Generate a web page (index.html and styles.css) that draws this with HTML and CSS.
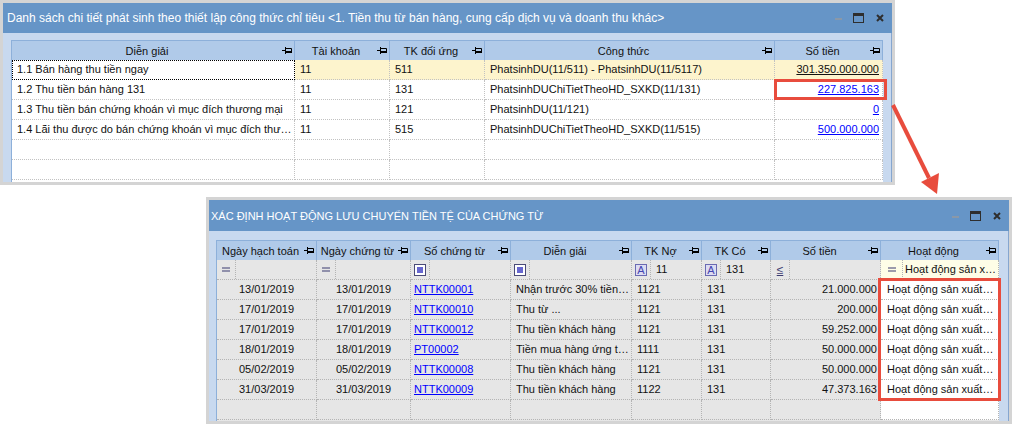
FILE: index.html
```html
<!DOCTYPE html>
<html lang="vi">
<head>
<meta charset="utf-8">
<title>Danh sách chi tiết phát sinh</title>
<link rel="stylesheet" href="styles.css">
</head>
<body>
<div class="win win-top">
  <div class="titlebar">
    <div class="title">Danh sách chi tiết phát sinh theo thiết lập công thức chỉ tiêu &lt;1. Tiền thu từ bán hàng, cung cấp dịch vụ và doanh thu khác&gt;</div>
    <div class="controls">
      <span class="ctl-min"></span>
      <span class="ctl-max"></span>
      <svg class="ctl-close" width="8" height="8" viewBox="0 0 8 8"><path d="M1 1L7 7M7 1L1 7" stroke="#2e2e2e" stroke-width="2"/></svg>
    </div>
  </div>
  <div class="wbody">
    <div class="grid gtop">
      <div class="hdr">
        <div class="hc"><span class="ht">Diễn giải</span><svg class="pin" width="10" height="7" viewBox="0 0 10 7"><path d="M0 3.5H3M3.5 0V7M4 1.5H9.5V5" fill="none" stroke="#000"/><path d="M4 5H10" stroke="#000" stroke-width="2"/></svg></div>
        <div class="hc"><span class="ht">Tài khoản</span><svg class="pin" width="10" height="7" viewBox="0 0 10 7"><path d="M0 3.5H3M3.5 0V7M4 1.5H9.5V5" fill="none" stroke="#000"/><path d="M4 5H10" stroke="#000" stroke-width="2"/></svg></div>
        <div class="hc"><span class="ht">TK đối ứng</span><svg class="pin" width="10" height="7" viewBox="0 0 10 7"><path d="M0 3.5H3M3.5 0V7M4 1.5H9.5V5" fill="none" stroke="#000"/><path d="M4 5H10" stroke="#000" stroke-width="2"/></svg></div>
        <div class="hc"><span class="ht">Công thức</span><svg class="pin" width="10" height="7" viewBox="0 0 10 7"><path d="M0 3.5H3M3.5 0V7M4 1.5H9.5V5" fill="none" stroke="#000"/><path d="M4 5H10" stroke="#000" stroke-width="2"/></svg></div>
        <div class="hc"><span class="ht">Số tiền</span><svg class="pin" width="10" height="7" viewBox="0 0 10 7"><path d="M0 3.5H3M3.5 0V7M4 1.5H9.5V5" fill="none" stroke="#000"/><path d="M4 5H10" stroke="#000" stroke-width="2"/></svg></div>
      </div>
      <div class="row focus">
        <div class="c cur">1.1 Bán hàng thu tiền ngay</div>
        <div class="c">11</div>
        <div class="c">511</div>
        <div class="c">PhatsinhDU(11/511) - PhatsinhDU(11/5117)</div>
        <div class="c r"><a class="lnk lnk-sel" href="#">301.350.000.000</a></div>
      </div>
      <div class="row">
        <div class="c">1.2 Thu tiền bán hàng 131</div>
        <div class="c">11</div>
        <div class="c">131</div>
        <div class="c">PhatsinhDUChiTietTheoHD_SXKD(11/131)</div>
        <div class="c r"><a class="lnk" href="#">227.825.163</a></div>
      </div>
      <div class="row">
        <div class="c">1.3 Thu tiền bán chứng khoán vì mục đích thương mại</div>
        <div class="c">11</div>
        <div class="c">121</div>
        <div class="c">PhatsinhDU(11/121)</div>
        <div class="c r"><a class="lnk" href="#">0</a></div>
      </div>
      <div class="row">
        <div class="c">1.4 Lãi thu được do bán chứng khoán vì mục đích thư…</div>
        <div class="c">11</div>
        <div class="c">515</div>
        <div class="c">PhatsinhDUChiTietTheoHD_SXKD(11/515)</div>
        <div class="c r"><a class="lnk" href="#">500.000.000</a></div>
      </div>
      <div class="row">
        <div class="c"></div><div class="c"></div><div class="c"></div><div class="c"></div><div class="c"></div>
      </div>
      <div class="row">
        <div class="c"></div><div class="c"></div><div class="c"></div><div class="c"></div><div class="c"></div>
      </div>
    </div>
  </div>
</div>

<div class="win win-bottom">
  <div class="titlebar">
    <div class="title">XÁC ĐỊNH HOẠT ĐỘNG LƯU CHUYỂN TIỀN TỆ CỦA CHỨNG TỪ</div>
    <div class="controls">
      <span class="ctl-min"></span>
      <span class="ctl-max"></span>
      <svg class="ctl-close" width="8" height="8" viewBox="0 0 8 8"><path d="M1 1L7 7M7 1L1 7" stroke="#2e2e2e" stroke-width="2"/></svg>
    </div>
  </div>
  <div class="wbody wbody-b">
    <div class="grid gbot">
      <div class="hdr">
        <div class="hc"><span class="ht">Ngày hạch toán</span><svg class="pin" width="10" height="7" viewBox="0 0 10 7"><path d="M0 3.5H3M3.5 0V7M4 1.5H9.5V5" fill="none" stroke="#000"/><path d="M4 5H10" stroke="#000" stroke-width="2"/></svg></div>
        <div class="hc"><span class="ht">Ngày chứng từ</span><svg class="pin" width="10" height="7" viewBox="0 0 10 7"><path d="M0 3.5H3M3.5 0V7M4 1.5H9.5V5" fill="none" stroke="#000"/><path d="M4 5H10" stroke="#000" stroke-width="2"/></svg></div>
        <div class="hc"><span class="ht">Số chứng từ</span><svg class="pin" width="10" height="7" viewBox="0 0 10 7"><path d="M0 3.5H3M3.5 0V7M4 1.5H9.5V5" fill="none" stroke="#000"/><path d="M4 5H10" stroke="#000" stroke-width="2"/></svg></div>
        <div class="hc"><span class="ht">Diễn giải</span><svg class="pin" width="10" height="7" viewBox="0 0 10 7"><path d="M0 3.5H3M3.5 0V7M4 1.5H9.5V5" fill="none" stroke="#000"/><path d="M4 5H10" stroke="#000" stroke-width="2"/></svg></div>
        <div class="hc"><span class="ht">TK Nợ</span><svg class="pin" width="10" height="7" viewBox="0 0 10 7"><path d="M0 3.5H3M3.5 0V7M4 1.5H9.5V5" fill="none" stroke="#000"/><path d="M4 5H10" stroke="#000" stroke-width="2"/></svg></div>
        <div class="hc"><span class="ht">TK Có</span><svg class="pin" width="10" height="7" viewBox="0 0 10 7"><path d="M0 3.5H3M3.5 0V7M4 1.5H9.5V5" fill="none" stroke="#000"/><path d="M4 5H10" stroke="#000" stroke-width="2"/></svg></div>
        <div class="hc"><span class="ht">Số tiền</span><svg class="pin" width="10" height="7" viewBox="0 0 10 7"><path d="M0 3.5H3M3.5 0V7M4 1.5H9.5V5" fill="none" stroke="#000"/><path d="M4 5H10" stroke="#000" stroke-width="2"/></svg></div>
        <div class="hc"><span class="ht">Hoạt động</span><svg class="pin" width="10" height="7" viewBox="0 0 10 7"><path d="M0 3.5H3M3.5 0V7M4 1.5H9.5V5" fill="none" stroke="#000"/><path d="M4 5H10" stroke="#000" stroke-width="2"/></svg></div>
      </div>
      <div class="row frow">
        <div class="c f"><span class="fi"><svg width="8" height="5" viewBox="0 0 8 5"><path d="M0 1H8M0 4H8" stroke="#3b3b70" stroke-width="1.2"/></svg></span><span class="fv"></span></div>
        <div class="c f"><span class="fi"><svg width="8" height="5" viewBox="0 0 8 5"><path d="M0 1H8M0 4H8" stroke="#3b3b70" stroke-width="1.2"/></svg></span><span class="fv"></span></div>
        <div class="c f"><span class="fi fi-l"><svg width="12" height="12" viewBox="0 0 12 12"><rect x="0.5" y="0.5" width="11" height="11" fill="#fff" stroke="#4a4a78"/><rect x="3" y="3" width="6" height="6" fill="#6767cf"/></svg></span><span class="fv"></span></div>
        <div class="c f"><span class="fi fi-l"><svg width="12" height="12" viewBox="0 0 12 12"><rect x="0.5" y="0.5" width="11" height="11" fill="#fff" stroke="#4a4a78"/><rect x="3" y="3" width="6" height="6" fill="#6767cf"/></svg></span><span class="fv"></span></div>
        <div class="c f"><span class="fi fi-l"><span class="ico-a">A</span></span><span class="fv">11</span></div>
        <div class="c f"><span class="fi fi-l"><span class="ico-a">A</span></span><span class="fv">131</span></div>
        <div class="c f"><span class="fi"><span class="ico-le">≤</span></span><span class="fv"></span></div>
        <div class="c f fy"><span class="fi fi-w"><svg width="8" height="5" viewBox="0 0 8 5"><path d="M0 1H8M0 4H8" stroke="#3b3b70" stroke-width="1.2"/></svg></span><span class="fv fv-t">Hoạt động sản x…</span></div>
      </div>
      <div class="row">
        <div class="c ctr">13/01/2019</div><div class="c ctr">13/01/2019</div><div class="c lk"><a class="lnk" href="#">NTTK00001</a></div><div class="c">Nhận trước 30% tiền…</div><div class="c">1121</div><div class="c">131</div><div class="c r">21.000.000</div><div class="c hd">Hoạt động sản xuất…</div>
      </div>
      <div class="row">
        <div class="c ctr">17/01/2019</div><div class="c ctr">17/01/2019</div><div class="c lk"><a class="lnk" href="#">NTTK00010</a></div><div class="c">Thu từ ...</div><div class="c">1121</div><div class="c">131</div><div class="c r">200.000</div><div class="c hd">Hoạt động sản xuất…</div>
      </div>
      <div class="row">
        <div class="c ctr">17/01/2019</div><div class="c ctr">17/01/2019</div><div class="c lk"><a class="lnk" href="#">NTTK00012</a></div><div class="c">Thu tiền khách hàng</div><div class="c">1121</div><div class="c">131</div><div class="c r">59.252.000</div><div class="c hd">Hoạt động sản xuất…</div>
      </div>
      <div class="row">
        <div class="c ctr">18/01/2019</div><div class="c ctr">18/01/2019</div><div class="c lk"><a class="lnk" href="#">PT00002</a></div><div class="c">Tiền mua hàng ứng t…</div><div class="c">1111</div><div class="c">131</div><div class="c r">50.000.000</div><div class="c hd">Hoạt động sản xuất…</div>
      </div>
      <div class="row">
        <div class="c ctr">05/02/2019</div><div class="c ctr">05/02/2019</div><div class="c lk"><a class="lnk" href="#">NTTK00008</a></div><div class="c">Thu tiền khách hàng</div><div class="c">1121</div><div class="c">131</div><div class="c r">50.000.000</div><div class="c hd">Hoạt động sản xuất…</div>
      </div>
      <div class="row">
        <div class="c ctr">31/03/2019</div><div class="c ctr">31/03/2019</div><div class="c lk"><a class="lnk" href="#">NTTK00009</a></div><div class="c">Thu tiền khách hàng</div><div class="c">1122</div><div class="c">131</div><div class="c r">47.373.163</div><div class="c hd">Hoạt động sản xuất…</div>
      </div>
      <div class="row">
        <div class="c"></div><div class="c"></div><div class="c"></div><div class="c"></div><div class="c"></div><div class="c"></div><div class="c"></div><div class="c hd"></div>
      </div>
    </div>
  </div>
</div>

<div class="mark mark-top"></div>
<div class="mark mark-bottom"></div>
<svg class="arrow" width="1017" height="427" viewBox="0 0 1017 427">
  <line x1="893" y1="105" x2="929" y2="178" stroke="#e84c3d" stroke-width="4"/>
  <polygon points="937,194 921,182 939,173" fill="#e84c3d"/>
</svg>
</body>
</html>
```

FILE: styles.css
```css
* { box-sizing: border-box; }
html, body { margin: 0; padding: 0; }
body {
  width: 1017px;
  height: 427px;
  background: #fff;
  position: relative;
  overflow: hidden;
  font-family: "Liberation Sans", Arial, sans-serif;
  font-size: 11px;
  color: #111;
}

.win {
  position: absolute;
  border: 3px solid #d4d4d4;
  background: #c8d9ef;
  display: flex;
  flex-direction: column;
}
.win-top { left: 0; top: 0; width: 895px; height: 185px; }
.win-bottom { left: 206px; top: 197px; width: 806px; height: 227px; }

.titlebar {
  height: 30px;
  flex: none;
  background: #6695c7;
  color: #fff;
  display: flex;
  align-items: center;
  padding-left: 4px;
  font-size: 12px;
}
.win-bottom .titlebar { height: 31px; padding-left: 2px; font-size: 11px; }
.title { flex: 1; white-space: nowrap; overflow: hidden; }
.controls { display: flex; align-items: center; margin-right: 8px; }
.ctl-min { width: 7px; height: 2px; background: #8a98a8; margin-top: 2px; }
.ctl-max {
  width: 11px; height: 10px;
  border: 1px solid #2e2e2e; border-top-width: 3px;
  margin-left: 11px;
}
.ctl-close { margin-left: 12px; }

.wbody {
  flex: 1;
  min-height: 0;
  display: flex;
  padding: 7px 8px 0 8px;
  border-right: 1px solid #86a6cf;
}
.wbody-b { padding: 9px 9px 0 7px; }

.grid {
  flex: none;
  display: flex;
  flex-direction: column;
  background: #fff;
  border-left: 1px solid #8db0da;
  border-top: 1px solid #8db0da;
}
.gtop { width: 872px; --cols: 283px 95px 95px 290px 108px; }
.gbot { width: 783px; --cols: 100px 94px 100px 121px 70px 69px 110px 118px; background: #e6e6e6; }

.hdr {
  display: grid;
  grid-template-columns: var(--cols);
  height: 19px;
  flex: none;
  background: #b0cae9;
}
.hc {
  display: flex;
  align-items: center;
  border-right: 1px solid #8db0da;
  padding-right: 2px;
  min-width: 0;
}
.ht { flex: 1; text-align: center; white-space: nowrap; overflow: hidden; color: #111; }
.pin { flex: none; }

.row {
  display: grid;
  grid-template-columns: var(--cols);
  height: 20px;
  flex: none;
}
.c {
  border-right: 1px dotted #c2c2c2;
  border-bottom: 1px dotted #c2c2c2;
  padding-left: 5px;
  line-height: 19px;
  white-space: nowrap;
  overflow: hidden;
  min-width: 0;
}
.gbot .c { border-color: #b4b4b4; }
.r { text-align: right; padding-left: 0; padding-right: 3px; }
.ctr { text-align: center; padding-left: 0; }
.lk { padding-left: 3px; }

.focus .c { background: #fdf4cd; }
.focus .cur { background: #fff; outline: 1px dotted #000; outline-offset: -1px; }

.lnk { color: #0000ff; text-decoration: underline; }
.lnk-sel { color: #111; }

.hd { background: #fff; padding-left: 6px; }

.f { display: flex; padding-left: 0; align-items: stretch; }
.fi {
  width: 19px;
  flex: none;
  display: flex;
  align-items: center;
  justify-content: center;
  border-right: 1px dotted #b4b4b4;
}
.fi-l { justify-content: flex-start; padding-left: 3px; }
.fi-w { width: 22px; }
.fv { padding-left: 5px; }
.fv-t { padding-left: 2px; }
.fy { background: #fefde7; }

.ico-a {
  display: block;
  width: 12px;
  height: 12px;
  border: 1px solid #6a6ab2;
  background: #dcdcf2;
  color: #4545b0;
  font-size: 11px;
  line-height: 10px;
  text-align: center;
}
.ico-le { color: #3b3b70; font-size: 12px; line-height: 12px; text-decoration: underline; }

.mark {
  position: absolute;
  border: 3px solid #e84c3d;
}
.mark-top { left: 774px; top: 79px; width: 113px; height: 21px; }
.mark-bottom { left: 878px; top: 278px; width: 123px; height: 123px; }

.arrow { position: absolute; left: 0; top: 0; pointer-events: none; }
```
